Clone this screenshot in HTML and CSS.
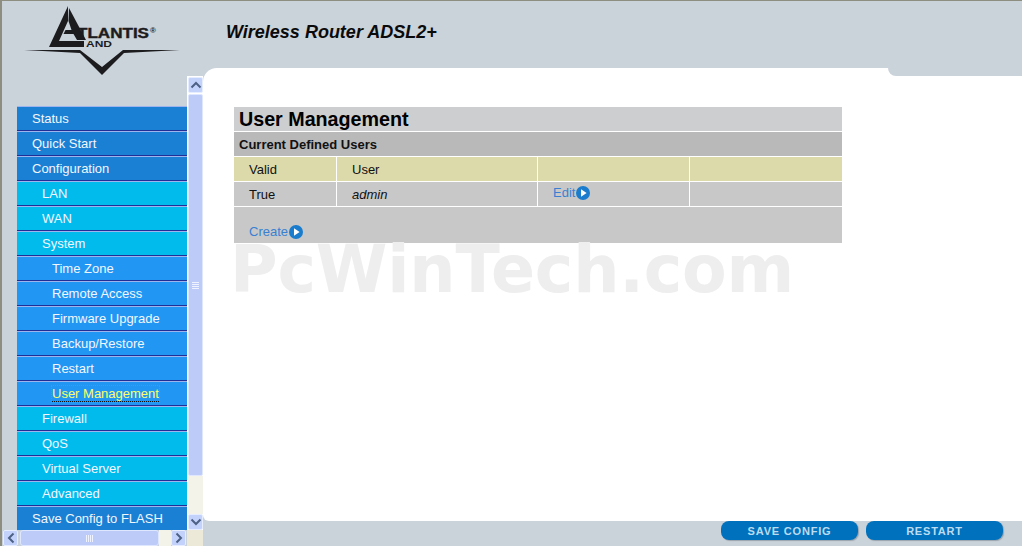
FILE: index.html
```html
<!DOCTYPE html>
<html lang="en">
<head>
  <meta charset="UTF-8" />
  <title>Wireless Router ADSL2+</title>
  <link rel="stylesheet" href="styles.css">
</head>
<body>
  <div class="page">

    <div class="logo-box">
      <svg class="logo" width="165" height="76" viewBox="20 2 165 76">
        <path class="logo-ink" d="M68 6 L49 47 H84 V41 H59 L68 21 Z" />
        <path class="logo-ink" d="M69 8 L86 40 H77 L73.5 34 H63.5 L65.5 30 H71.5 L68.5 21 Z" />
        <text class="logo-t" x="77" y="38" textLength="72" lengthAdjust="spacingAndGlyphs">TLANTIS</text>
        <text class="logo-reg" x="150" y="33">®</text>
        <text class="logo-and" x="86" y="47" textLength="26" lengthAdjust="spacingAndGlyphs">AND</text>
        <path class="logo-ink" d="M24 50 L80 50 L102 67 L123 50 L180 50 L124 53 L102 75 L80 53 Z" />
      </svg>
    </div>

    <header class="top">
      <div class="product">Wireless Router ADSL2+</div>
    </header>

    <aside class="side">
      <nav class="menu">
        <a class="item lv1">Status</a>
        <a class="item lv1">Quick Start</a>
        <a class="item lv1">Configuration</a>
        <a class="item lv2">LAN</a>
        <a class="item lv2">WAN</a>
        <a class="item lv2">System</a>
        <a class="item lv3">Time Zone</a>
        <a class="item lv3">Remote Access</a>
        <a class="item lv3">Firmware Upgrade</a>
        <a class="item lv3">Backup/Restore</a>
        <a class="item lv3">Restart</a>
        <a class="item lv3"><span class="current">User Management</span></a>
        <a class="item lv2">Firewall</a>
        <a class="item lv2">QoS</a>
        <a class="item lv2">Virtual Server</a>
        <a class="item lv2">Advanced</a>
        <a class="item lv1">Save Config to FLASH</a>
      </nav>

      <div class="vbar">
        <div class="sb-btn"><svg width="12" height="8" viewBox="0 0 12 8"><path class="sb-arrow" d="M1.5 6.5 L6 2 L10.5 6.5" /></svg></div>
        <div class="vthumb">
          <svg width="7" height="7" viewBox="0 0 7 7"><path class="sb-grip" d="M0 .5H7M0 2.5H7M0 4.5H7M0 6.5H7" /></svg>
        </div>
        <div class="vtrack"></div>
        <div class="sb-btn"><svg width="12" height="8" viewBox="0 0 12 8"><path class="sb-arrow" d="M1.5 1.5 L6 6 L10.5 1.5" /></svg></div>
      </div>

      <div class="hbar">
        <div class="sb-btn"><svg width="8" height="12" viewBox="0 0 8 12"><path class="sb-arrow" d="M6.5 1.5 L2 6 L6.5 10.5" /></svg></div>
        <div class="hthumb">
          <svg width="7" height="7" viewBox="0 0 7 7"><path class="sb-grip" d="M.5 0V7M2.5 0V7M4.5 0V7M6.5 0V7" /></svg>
        </div>
        <div class="htrack"></div>
        <div class="sb-btn"><svg width="8" height="12" viewBox="0 0 8 12"><path class="sb-arrow" d="M1.5 1.5 L6 6 L1.5 10.5" /></svg></div>
      </div>
      <div class="corner"></div>
    </aside>

    <main class="content">
      <div class="notch"></div>

      <table class="users">
        <colgroup>
          <col class="c1"><col class="c2"><col class="c3"><col class="c4">
        </colgroup>
        <tr class="title-row"><td colspan="4">User Management</td></tr>
        <tr class="sub-row"><td colspan="4">Current Defined Users</td></tr>
        <tr class="head-row">
          <td>Valid</td>
          <td>User</td>
          <td></td>
          <td></td>
        </tr>
        <tr class="data-row">
          <td>True</td>
          <td><i>admin</i></td>
          <td class="raised">
            <a class="link">Edit<svg class="go" width="14" height="14" viewBox="0 0 14 14"><circle class="go-bg" cx="7" cy="7" r="7" /><path class="go-fg" d="M5 3.2 L10.6 7 L5 10.8 Z" /></svg></a>
          </td>
          <td></td>
        </tr>
        <tr class="create-row">
          <td colspan="4">
            <a class="link">Create<svg class="go" width="14" height="14" viewBox="0 0 14 14"><circle class="go-bg" cx="7" cy="7" r="7" /><path class="go-fg" d="M5 3.2 L10.6 7 L5 10.8 Z" /></svg></a>
          </td>
        </tr>
      </table>

      <div class="watermark">PcWinTech.com</div>
    </main>

    <footer class="actions">
      <button class="action">SAVE CONFIG</button>
      <button class="action">RESTART</button>
    </footer>

  </div>
</body>
</html>
```

FILE: styles.css
```css
:root {
  --frame-bg: #cad2da;
  --lv1: #1a80d3;
  --lv2: #00bbec;
  --lv3: #2196f3;
  --bar: #bccbf8;
  --link: #3a80d2;
}

html, body {
  margin: 0;
  height: 100%;
  overflow: hidden;
}

body {
  background-color: var(--frame-bg);
  font-family: "Liberation Sans", Arial, sans-serif;
  font-size: 13px;
}

.page {
  box-sizing: border-box;
  width: 1022px;
  height: 546px;
  border-top: 1px solid #8d8d80;
  border-left: 2px solid #8d8d80;
  display: grid;
  grid-template-columns: 201px 1fr;
  grid-template-rows: 67px 453px 25px;
}

/* header */
.logo-box {
  padding-left: 18px;
  margin-top: 1px;
}

.logo {
  display: block;
}

.logo-ink {
  fill: #1c1c1e;
}

.logo-t {
  font-family: "Liberation Sans", sans-serif;
  font-weight: bold;
  font-size: 14px;
  fill: #1c1c1e;
  stroke: #1c1c1e;
  stroke-width: .4;
}

.logo-reg {
  font-size: 8px;
  font-weight: bold;
  fill: #1c1c1e;
}

.logo-and {
  font-weight: bold;
  font-size: 9px;
  fill: #1c1c1e;
}

.top {
  padding: 21px 0 0 23px;
}

.product {
  font-size: 18px;
  font-weight: bold;
  font-style: italic;
  line-height: 21px;
  color: #0a0a0a;
}

/* left frame */
.side {
  grid-column: 1;
  grid-row: 2 / 4;
  margin-top: 8px;
  display: grid;
  grid-template-columns: 185px 16px;
  grid-template-rows: 454px 16px;
}

.menu {
  padding: 30px 0 0 15px;
  overflow: hidden;
}

.item {
  box-sizing: border-box;
  display: block;
  height: 25px;
  line-height: 23px;
  color: #f4f6ff;
  border-top: 1px solid #9db4ee;
  border-bottom: 1px solid #1f2f96;
  white-space: nowrap;
}

.lv1 {
  background-color: var(--lv1);
  padding-left: 15px;
}

.lv2 {
  background-color: var(--lv2);
  padding-left: 25px;
}

.lv3 {
  background-color: var(--lv3);
  padding-left: 35px;
}

.current {
  color: #ffff66;
  outline: 1px dotted #b9785a;
  border-bottom: 1px dotted #111;
}

/* fake scrollbars */
.vbar {
  display: flex;
  flex-direction: column;
  background-color: #fff;
  padding: 1px 0 0 1px;
}

.hbar {
  display: flex;
  padding: 0 1px 0 1px;
}

.sb-btn {
  box-sizing: border-box;
  flex: none;
  width: 15px;
  height: 16px;
  display: flex;
  align-items: center;
  justify-content: center;
  background-color: #c3d2fb;
  border: 1px solid #e6edff;
  border-radius: 2px;
}

.sb-arrow {
  fill: none;
  stroke: #4d6185;
  stroke-width: 2;
}

.sb-grip {
  fill: none;
  stroke: #eef3ff;
  stroke-width: 1;
}

.vthumb {
  box-sizing: border-box;
  height: 382px;
  margin-top: 1px;
  background-color: var(--bar);
  border: 1px solid #dfe7ff;
  border-radius: 2px;
  display: flex;
  align-items: center;
  justify-content: center;
}

.vtrack {
  flex: 1;
  background-color: #f4f3ea;
}

.hthumb {
  box-sizing: border-box;
  width: 139px;
  margin-left: 2px;
  background-color: var(--bar);
  border: 1px solid #dfe7ff;
  border-radius: 3px;
  display: flex;
  align-items: center;
  justify-content: center;
}

.htrack {
  flex: 1;
  background-color: #f4f3ea;
}

.corner {
  background-color: #ece9d8;
}

/* main frame */
.content {
  position: relative;
  grid-column: 2;
  grid-row: 2;
  background-color: #fff;
  border-radius: 14px 0 0 6px;
  padding: 39px 0 0 31px;
}

.notch {
  position: absolute;
  top: 0;
  right: 0;
  width: 134px;
  height: 8px;
  background-color: var(--frame-bg);
  border-bottom-left-radius: 8px;
}

.users {
  width: 608px;
  table-layout: fixed;
  border-collapse: separate;
  border-spacing: 0;
  color: #111;
  font-size: 13px;
}

.c1 { width: 103px; }
.c2 { width: 201px; }
.c3 { width: 152px; }
.c4 { width: 152px; }

.users td {
  box-sizing: border-box;
  height: 25px;
  padding: 0 0 0 15px;
  border-bottom: 1px solid #fff;
  border-right: 1px solid #fff;
}

.users td:last-child {
  border-right: none;
}

.users .title-row td {
  background-color: #cdcecf;
  padding-left: 5px;
  font-size: 19.7px;
  font-weight: bold;
  color: #000;
}

.users .sub-row td {
  background-color: #b9b9b9;
  padding-left: 5px;
  font-weight: bold;
}

.head-row td {
  background-color: #dcdaaa;
}

.data-row td {
  background-color: #c8c8c8;
}

.users .create-row td {
  height: 36px;
  background-color: #c8c8c8;
  border: none;
  vertical-align: bottom;
  padding-bottom: 3px;
}

.users .raised {
  vertical-align: top;
  padding-top: 3px;
}

.link {
  color: var(--link);
  line-height: 16px;
}

.go {
  vertical-align: -3px;
  margin-left: 1px;
}

.go-bg {
  fill: #1a7ccc;
}

.go-fg {
  fill: #fff;
}

.watermark {
  margin: 2px 0 0 -4px;
  font-family: "DejaVu Sans", sans-serif;
  font-size: 65px;
  font-weight: bold;
  letter-spacing: -.2px;
  line-height: 50px;
  color: #eeeeee;
  white-space: nowrap;
}

/* footer */
.actions {
  grid-column: 2;
  grid-row: 3;
  display: flex;
  justify-content: flex-end;
  gap: 8px;
  padding-right: 19px;
}

.action {
  width: 137px;
  height: 19px;
  padding: 0;
  border: none;
  border-radius: 8px;
  background-color: #0071bc;
  box-shadow: 1px 1px 1px #9aa4ae;
  color: #bcdcf2;
  font-family: "Liberation Sans", Arial, sans-serif;
  font-size: 11px;
  font-weight: bold;
  letter-spacing: .8px;
}
```
